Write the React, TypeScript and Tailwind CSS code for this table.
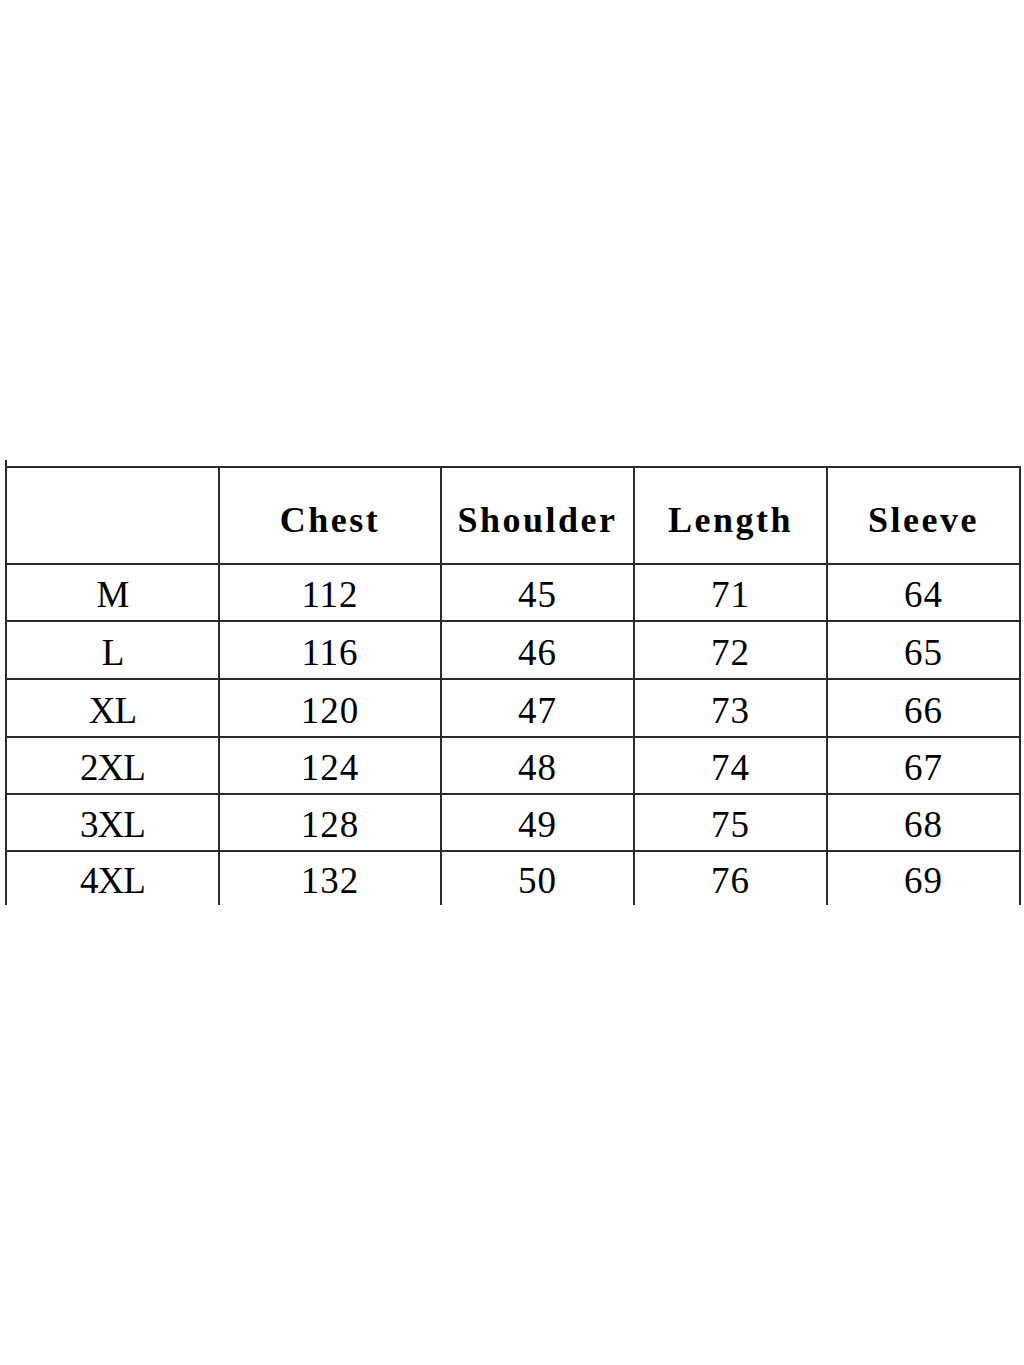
const headers = ['Chest', 'Shoulder', 'Length', 'Sleeve'];

const rows = [
  { size: 'M', values: ['112', '45', '71', '64'], h: 'h-[57px]' },
  { size: 'L', values: ['116', '46', '72', '65'], h: 'h-[58px]' },
  { size: 'XL', values: ['120', '47', '73', '66'], h: 'h-[58px]' },
  { size: '2XL', values: ['124', '48', '74', '67'], h: 'h-[57px]' },
  { size: '3XL', values: ['128', '49', '75', '68'], h: 'h-[57px]' },
];

const last = { size: '4XL', values: ['132', '50', '76', '69'] };

const grid = 'grid grid-cols-[213px_222px_193px_193px_193px]';
const cell = 'flex items-center justify-center border-r-2 border-[#2a2a2a]';
const num = "font-['Liberation_Serif',serif] text-[37px] leading-none tracking-[1px] text-black";
const sizeCls = "font-['Liberation_Serif',serif] text-[37px] leading-none tracking-[-1px] text-black";
const head = "font-['Liberation_Serif',serif] font-bold text-[36px] leading-none tracking-[2.5px] text-black";

export default function App() {
  return (
    <div className="w-[1024px] h-[1365px] bg-white pt-[460px] pl-[5px]">
      <div className="w-[1016px] border-l-2 border-[#2a2a2a] pt-[6px]">
        <div className="border-t-2 border-[#2a2a2a]">
          {/* header */}
          <div className={`${grid} h-[97px] border-b-2 border-[#2a2a2a]`}>
            <div className={cell} />
            {headers.map((h) => (
              <div key={h} className={cell}>
                <span className={`${head} pt-[8px]`}>{h}</span>
              </div>
            ))}
          </div>

          {rows.map((r) => (
            <div key={r.size} className={`${grid} ${r.h} border-b-2 border-[#2a2a2a]`}>
              <div className={cell}>
                <span className={`${sizeCls} pt-[4px]`}>{r.size}</span>
              </div>
              {r.values.map((v, i) => (
                <div key={i} className={cell}>
                  <span className={`${num} pt-[4px]`}>{v}</span>
                </div>
              ))}
            </div>
          ))}

          <div className={`${grid} h-[53px]`}>
            <div className={cell}>
              <span className={`${sizeCls} pt-[4px]`}>{last.size}</span>
            </div>
            {last.values.map((v, i) => (
              <div key={i} className={cell}>
                <span className={`${num} pt-[4px]`}>{v}</span>
              </div>
            ))}
          </div>
        </div>
      </div>
    </div>
  );
}
